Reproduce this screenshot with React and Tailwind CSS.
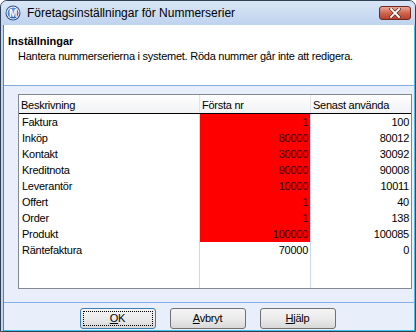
import React from "react";

const rows = [
  { name: "Faktura", first: "1", last: "100", locked: true },
  { name: "Inköp", first: "80000", last: "80012", locked: true },
  { name: "Kontakt", first: "30000", last: "30092", locked: true },
  { name: "Kreditnota", first: "90000", last: "90008", locked: true },
  { name: "Leverantör", first: "10000", last: "10011", locked: true },
  { name: "Offert", first: "1", last: "40", locked: true },
  { name: "Order", first: "1", last: "138", locked: true },
  { name: "Produkt", first: "100000", last: "100085", locked: true },
  { name: "Räntefaktura", first: "70000", last: "0", locked: false },
];

const AppIcon = () => (
  <svg width="16" height="16" viewBox="0 0 16 16">
    <defs>
      <radialGradient id="ic" cx="0.4" cy="0.35" r="0.7">
        <stop offset="0" stopColor="#7fb0f0" />
        <stop offset="1" stopColor="#1d4fb0" />
      </radialGradient>
    </defs>
    <circle cx="8" cy="8" r="7.5" fill="#2a4f8f" />
    <circle cx="8" cy="8" r="6.5" fill="#ffffff" />
    <circle cx="8" cy="8" r="5.5" fill="url(#ic)" />
    <text x="8" y="11.5" textAnchor="middle" fontSize="10" fontWeight="bold" fill="#ffffff" fontFamily="Liberation Sans, sans-serif">M</text>
  </svg>
);

const CloseButton = () => (
  <div className="w-[32px] h-[14px] rounded-[3px] border border-[#6b2a22] bg-gradient-to-b from-[#e8a89a] via-[#d0654f] to-[#b8402c] flex items-center justify-center">
    <svg width="12" height="10" viewBox="0 0 12 10">
      <path d="M2 1 L10 9 M10 1 L2 9" stroke="#5a2a24" strokeWidth="3.2" strokeLinecap="square" />
      <path d="M2 1 L10 9 M10 1 L2 9" stroke="#ffffff" strokeWidth="1.8" strokeLinecap="square" />
    </svg>
  </div>
);

const Button = ({ children, focused }) => (
  <div
    className={
      "w-[76px] h-[21px] rounded-[3px] bg-gradient-to-b from-[#f4f4f4] via-[#ebebeb] to-[#d8d8d8] flex items-center justify-center " +
      (focused ? "border border-[#3c7fb1] p-[2px]" : "border border-[#707070]")
    }
  >
    {focused ? (
      <div className="w-full h-full border border-dotted border-black flex items-center justify-center">
        {children}
      </div>
    ) : (
      children
    )}
  </div>
);

export default function App() {
  return (
    <div className="w-[416px] h-[332px] bg-[#c4d6ee] border border-[#2e3f56] rounded-t-[7px] flex flex-col font-['Liberation_Sans',sans-serif] text-[11px] tracking-[-0.25px] text-black overflow-hidden">
      {/* title bar */}
      <div className="h-[24px] flex items-center pl-[4px] pr-[4px] bg-gradient-to-b from-[#d9e6f6] to-[#bfd3ee]">
        <AppIcon />
        <span className="ml-[6px] text-[12px] tracking-normal text-black">Företagsinställningar för Nummerserier</span>
        <div className="ml-auto">
          <CloseButton />
        </div>
      </div>

      {/* client */}
      <div className="flex-1 ml-[2px] border-l border-[#5d7fae] border-r border-b border-r-[#3ec3e8] border-b-[#3ec3e8] bg-[#e9eefb] flex flex-col">
        <div className="h-[61px] bg-white border-b border-[#84acde] pt-[9px] pl-[4px]">
          <div className="font-bold leading-[14px] tracking-normal">Inställningar</div>
          <div className="pl-[10px] leading-[14px] mt-[1px]">
            Hantera nummerserierna i systemet. Röda nummer går inte att redigera.
          </div>
        </div>

        {/* list */}
        <div className="mt-[8px] ml-[14px] mr-[2px] h-[195px] border border-[#828790] bg-white flex flex-col">
          <div className="h-[18px] flex bg-gradient-to-b from-[#ffffff] to-[#f1f2f4]">
            <div className="w-[181px] pl-[2px] pt-[2px] border-r border-[#e2e3e5]">Beskrivning</div>
            <div className="w-[111px] pl-[2px] pt-[2px] border-r border-[#e2e3e5]">Första nr</div>
            <div className="flex-1 pl-[2px] pt-[2px]">Senast använda</div>
          </div>
          <div className="h-[1px] bg-black" />
          <div className="flex-1 flex">
            <div className="w-[181px] border-r border-[#c9dbf3]">
              {rows.map((r) => (
                <div key={r.name} className="h-[16px] pl-[3px] leading-[16px]">
                  {r.name}
                </div>
              ))}
            </div>
            <div className="w-[111px] border-r border-[#c9dbf3]">
              {rows.map((r) => (
                <div
                  key={r.name}
                  className={
                    "h-[16px] pr-[2px] leading-[16px] text-right " +
                    (r.locked ? "bg-[#ff0000] text-[#2a0000]" : "")
                  }
                >
                  {r.first}
                </div>
              ))}
            </div>
            <div className="flex-1">
              {rows.map((r) => (
                <div key={r.name} className="h-[16px] pr-[2px] leading-[16px] text-right">
                  {r.last}
                </div>
              ))}
            </div>
          </div>
        </div>

        <div className="mt-[13px] h-[1px] bg-[#86aee6]" />

        <div className="mt-[5px] flex justify-center gap-[14px] pr-[3px]">
          <Button focused>
            <span><span className="underline">O</span>K</span>
          </Button>
          <Button>
            <span><span className="underline">A</span>vbryt</span>
          </Button>
          <Button>
            <span><span className="underline">H</span>jälp</span>
          </Button>
        </div>
      </div>
    </div>
  );
}
